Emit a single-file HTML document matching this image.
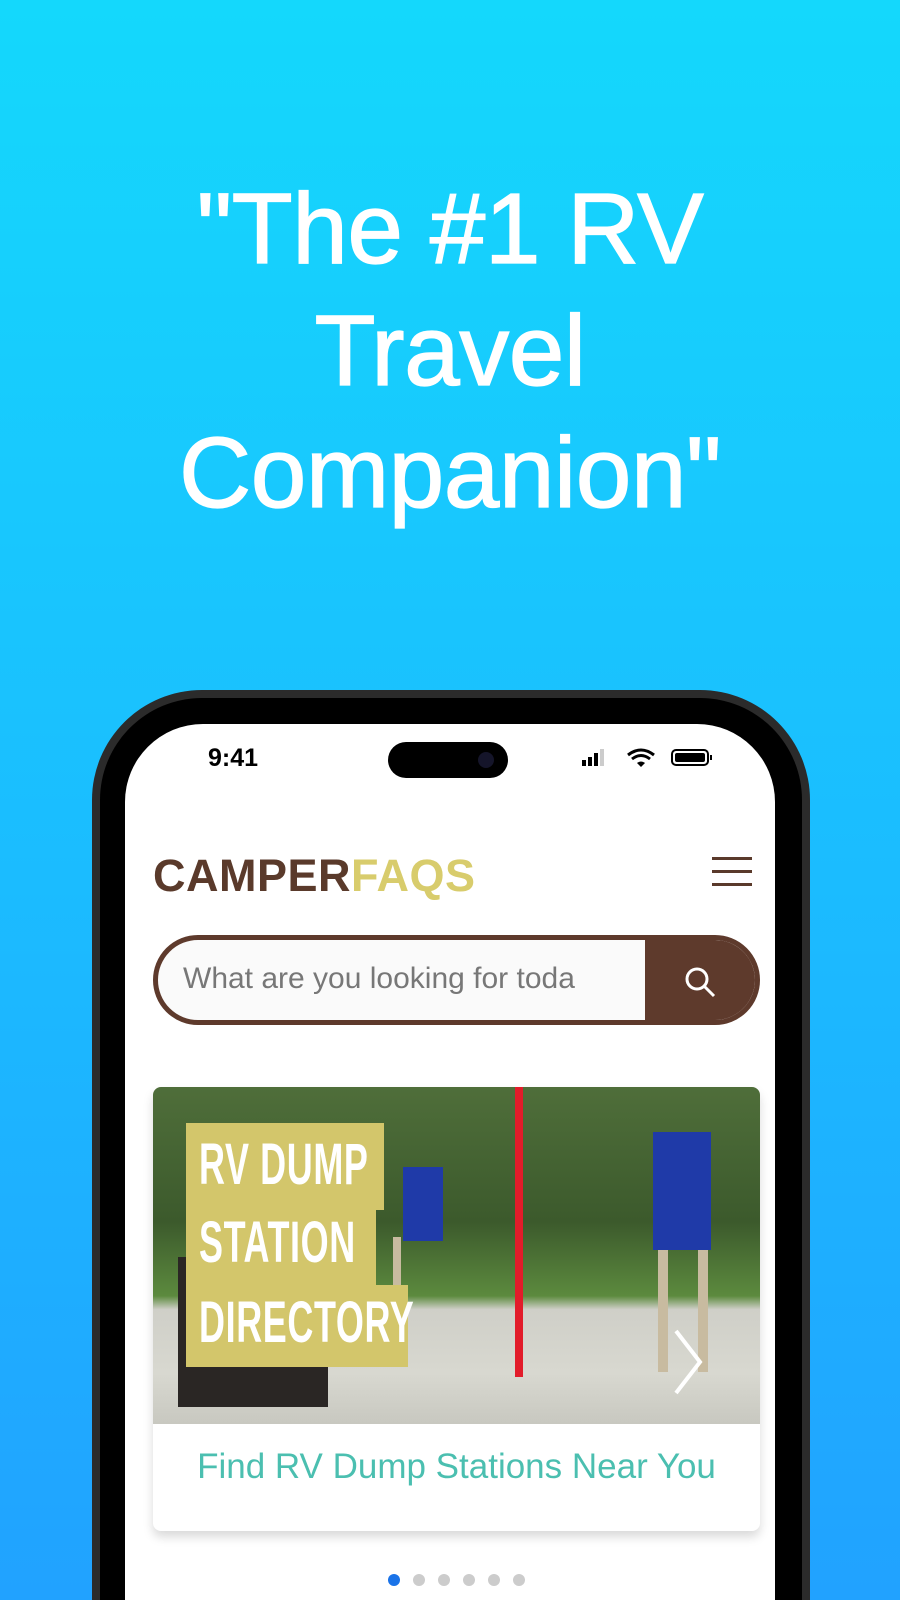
<!DOCTYPE html>
<html><head><meta charset="utf-8"><style>
*{margin:0;padding:0;box-sizing:border-box}
html,body{width:900px;height:1600px;overflow:hidden;background:#1fa6ff}
body{font-family:"Liberation Sans",sans-serif}
.wrap{position:absolute;left:0;top:0;width:900px;height:1600px;overflow:hidden;background:linear-gradient(180deg,#14d8fc 0%,#1bbcff 55%,#21a2ff 100%)}
.h{position:absolute;left:0;width:900px;text-align:center;color:#fff;font-size:100px;line-height:122px;top:168px;letter-spacing:-0.5px;-webkit-text-stroke:1.3px #fff}
.phone{position:absolute;left:92px;top:690px;width:718px;height:910px;background:#2b2b2b;border-radius:110px 110px 0 0}
.bez{position:absolute;left:8px;top:8px;right:8px;bottom:0;background:#000;border-radius:102px 102px 0 0}
.scr{position:absolute;left:125px;top:724px;width:650px;height:876px;background:#fff;border-radius:78px 78px 0 0}
.isl{position:absolute;left:388px;top:742px;width:120px;height:36px;background:#000;border-radius:18px}
.t{position:absolute;left:208px;top:744px;font-size:25px;font-weight:bold;color:#000}
.logo{position:absolute;left:153px;top:850px;font-size:45px;font-weight:bold;color:#5a3a2b;letter-spacing:0.5px}
.logo span{color:#d8cc6c}
.ham{position:absolute;left:712px;width:40px;height:3px;background:#5a3a2b}
.srch{position:absolute;left:153px;top:935px;width:607px;height:90px;border:5px solid #5e3a2c;border-radius:45px;overflow:hidden;background:#fafafa}
.srch .btn{position:absolute;right:0;top:0;width:110px;height:100%;background:#5e3a2c}
.srch .ph{position:absolute;left:25px;top:22px;font-size:30px;color:#777}
.card{position:absolute;left:153px;top:1087px;width:607px;height:444px;background:#fff;border-radius:8px;box-shadow:0 6px 10px rgba(0,0,0,.15);overflow:hidden}
.img{position:absolute;left:0;top:0;width:607px;height:337px;background:linear-gradient(180deg,#4f6e3a 0%,#3c5a2c 40%,#5c8a3e 62%,#cfcfc8 66%,#d8d8d0 85%,#c8c8c0 100%)}
.yb{position:absolute;background:#d3c66b}
.yt{position:absolute;left:46px;color:#fff;font-size:58px;font-weight:bold;transform:scaleX(.62);transform-origin:left;letter-spacing:1px}
.cap{position:absolute;left:0;width:607px;top:360px;text-align:center;color:#4bbfb0;font-size:35px}
.dot{position:absolute;top:1574px;width:12px;height:12px;border-radius:6px;background:#ccc}
</style></head><body><div class="wrap">
<div class="h">"The #1 RV<br>Travel<br>Companion"</div>
<div class="phone"><div class="bez"></div></div>
<div class="scr"></div>
<div class="isl"><div style="position:absolute;right:14px;top:10px;width:16px;height:16px;border-radius:8px;background:#15152a"></div></div>
<div class="t">9:41</div>
<svg style="position:absolute;left:582px;top:748px" width="132" height="22">
<rect x="0" y="12" width="4" height="6" fill="#000"/><rect x="6" y="9" width="4" height="9" fill="#000"/><rect x="12" y="5" width="4" height="13" fill="#000"/><rect x="18" y="1" width="4" height="17" fill="#ccc"/>
<path d="M46 7 Q59 -3 72 7" stroke="#000" stroke-width="3" fill="none"/><path d="M50 11 Q59 4 68 11" stroke="#000" stroke-width="3" fill="none"/><path d="M55 15 L59 19 L63 15 Q59 12 55 15Z" fill="#000"/>
<rect x="90" y="2" width="36" height="15" rx="4" fill="none" stroke="#000" stroke-width="2"/><rect x="93" y="5" width="30" height="9" rx="2" fill="#000"/><rect x="128" y="7" width="2" height="5" fill="#000"/>
</svg>
<div class="logo">CAMPER<span>FAQS</span></div>
<div class="ham" style="top:857px"></div><div class="ham" style="top:870px"></div><div class="ham" style="top:883px"></div>
<div class="srch"><div class="ph">What are you looking for toda</div><div class="btn">
<svg style="position:absolute;left:38px;top:25px" width="36" height="36"><circle cx="14" cy="14" r="10" stroke="#fff" stroke-width="3" fill="none"/><path d="M21 21 L31 31" stroke="#fff" stroke-width="3"/></svg></div></div>
<div class="card"><div class="img">
<div style="position:absolute;left:240px;top:150px;width:8px;height:130px;background:#c8bba0"></div>
<div style="position:absolute;left:250px;top:80px;width:40px;height:74px;background:#1f3aa8"></div>
<div style="position:absolute;left:362px;top:0;width:8px;height:290px;background:#e21c2a"></div>
<div style="position:absolute;left:505px;top:45px;width:10px;height:240px;background:#c8bba0"></div>
<div style="position:absolute;left:545px;top:45px;width:10px;height:240px;background:#c8bba0"></div>
<div style="position:absolute;left:500px;top:45px;width:58px;height:118px;background:#1f3aa8"></div>
<div style="position:absolute;left:25px;top:170px;width:150px;height:150px;background:#2a2624"></div>
<div class="yb" style="left:33px;top:36px;width:198px;height:87px"></div>
<div class="yb" style="left:33px;top:120px;width:190px;height:80px"></div>
<div class="yb" style="left:33px;top:198px;width:222px;height:82px"></div>
<div class="yt" style="top:44px">RV DUMP</div>
<div class="yt" style="top:122px">STATION</div>
<div class="yt" style="top:202px">DIRECTORY</div>
<svg style="position:absolute;left:515px;top:240px" width="40" height="70"><path d="M8 4 L32 35 L8 66" stroke="#fff" stroke-width="4" fill="none"/></svg>
</div><div class="cap">Find RV Dump Stations Near You</div></div>
<div class="dot" style="left:388px;background:#1a73e8"></div>
<div class="dot" style="left:413px"></div><div class="dot" style="left:438px"></div><div class="dot" style="left:463px"></div><div class="dot" style="left:488px"></div><div class="dot" style="left:513px"></div>
</div></body></html>
